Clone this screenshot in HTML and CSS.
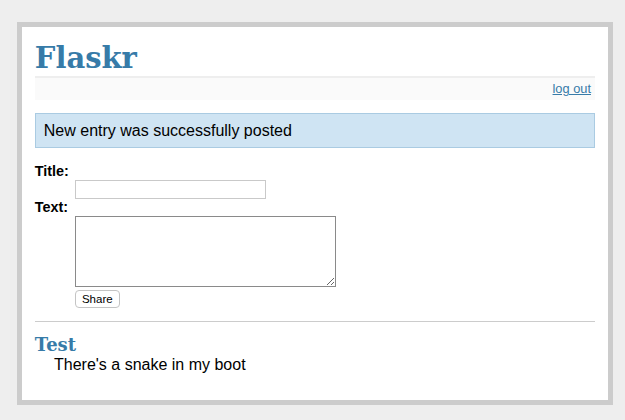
FILE: index.html
```html
<!DOCTYPE html>
<html>
<head>
<meta charset="utf-8">
<title>Flaskr</title>
<link rel="stylesheet" href="styles.css">
</head>
<body>
<div class="page">
  <h1 class="title">Flaskr</h1>
  <div class="metanav"><a href="#">log out</a></div>
  <div class="flash">New entry was successfully posted</div>
  <form class="add-entry">
    <dl class="fields">
      <dt class="label">Title:</dt>
      <dd class="field"><input class="title-input" type="text" name="title"></dd>
      <dt class="label">Text:</dt>
      <dd class="field"><textarea class="text-input" name="text"></textarea></dd>
      <dd class="field"><button class="share" type="button">Share</button></dd>
    </dl>
  </form>
  <ul class="entries">
    <li class="entry"><h2 class="entry-title">Test</h2>There's a snake in my boot</li>
  </ul>
</div>
</body>
</html>
```

FILE: styles.css
```css
html, body {
  margin: 0;
  padding: 0;
}
body {
  background: #eee;
  font-family: "Liberation Sans", Arial, sans-serif;
  font-size: 16px;
  color: #000;
}
.page {
  margin: 22px 0 0 17px;
  width: 560px;
  padding: 12.8px;
  border: 5px solid #ccc;
  background: #fff;
}
.title, .entry-title {
  font-family: "DejaVu Serif", Georgia, serif;
  font-weight: bold;
  color: #377ba8;
  margin: 0;
}
.title {
  font-size: 29px;
  line-height: 36px;
  border-bottom: 2px solid #eee;
}
.metanav {
  text-align: right;
  font-size: 12.8px;
  line-height: 15px;
  padding: 3.6px 3.84px;
  margin-bottom: 12.8px;
  background: #fafafa;
}
.metanav a {
  color: #377ba8;
}
.flash {
  background: #cfe4f3;
  border: 1px solid #aacbe2;
  padding: 0 8px;
  height: 33px;
  line-height: 33px;
}
.add-entry {
  font-size: 14.4px;
  border-bottom: 1px solid #ccc;
}
.fields {
  margin: 0;
  padding: 15px 0 13px;
  font-weight: bold;
}
.label {
  line-height: 17px;
}
.field {
  margin: 0 0 0 40px;
}
.title-input {
  display: block;
  box-sizing: border-box;
  width: 191px;
  height: 19px;
  margin: 0;
  padding: 0 2px;
  border: 1px solid #c9c9c9;
  font: 12px "Liberation Sans", Arial, sans-serif;
}
.text-input {
  display: block;
  box-sizing: border-box;
  width: 261px;
  height: 71px;
  margin: 0;
  padding: 2px;
  border: 1px solid #8a8a8a;
  font: 12px "Liberation Mono", monospace;
}
.share {
  display: block;
  box-sizing: border-box;
  margin-top: 3px;
  width: 45px;
  height: 18px;
  padding: 0;
  border: 1px solid #c4c4c4;
  border-radius: 4px;
  background: #fff;
  font: 11.5px "Liberation Sans", Arial, sans-serif;
  color: #000;
}
.entries {
  list-style: none;
  margin: 0;
  padding: 0;
}
.entry {
  margin: 12.5px 19.2px 12.8px;
  line-height: 18px;
}
.entry-title {
  font-size: 18px;
  line-height: 22px;
  margin-left: -19.2px;
}
```
